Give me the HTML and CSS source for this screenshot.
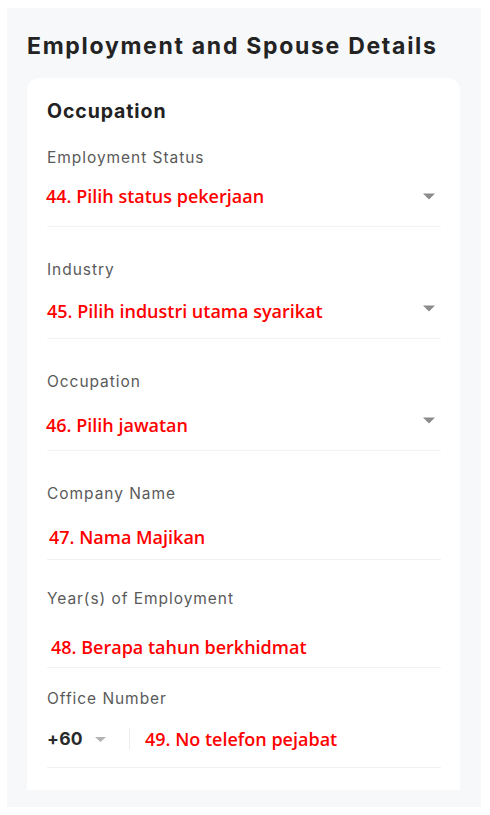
FILE: index.html
```html
<!DOCTYPE html>
<html>
<head>
<meta charset="utf-8">
<link rel="stylesheet" href="styles.css">
</head>
<body>
<div class="panel">
  <h1 class="title">Employment and Spouse Details</h1>
  <div class="card">
    <h2 class="heading">Occupation</h2>

    <div class="field">
      <div class="label">Employment Status</div>
      <div class="row">
        <span class="value">44. Pilih status pekerjaan</span>
        <svg class="caret" width="12" height="7" viewBox="0 0 12 7"><path d="M0 0.5 H12 L6 6.5 Z" fill="#8c8c8c"/></svg>
      </div>
    </div>

    <div class="field">
      <div class="label">Industry</div>
      <div class="row">
        <span class="value value--low value--in1">45. Pilih industri utama syarikat</span>
        <svg class="caret" width="12" height="7" viewBox="0 0 12 7"><path d="M0 0.5 H12 L6 6.5 Z" fill="#8c8c8c"/></svg>
      </div>
    </div>

    <div class="field">
      <div class="label">Occupation</div>
      <div class="row">
        <span class="value value--lower">46. Pilih jawatan</span>
        <svg class="caret" width="12" height="7" viewBox="0 0 12 7"><path d="M0 0.5 H12 L6 6.5 Z" fill="#8c8c8c"/></svg>
      </div>
    </div>

    <div class="field">
      <div class="label">Company Name</div>
      <div class="row row--text">
        <span class="value value--in3">47. Nama Majikan</span>
      </div>
    </div>

    <div class="field field--tight">
      <div class="label">Year(s) of Employment</div>
      <div class="row row--text row--tall">
        <span class="value value--in5">48. Berapa tahun berkhidmat</span>
      </div>
    </div>

    <div class="field field--tighter">
      <div class="label">Office Number</div>
      <div class="row row--phone">
        <span class="code">+60</span>
        <svg class="code-caret" width="11" height="5" viewBox="0 0 11 5"><path d="M0 0 H11 L5.5 5 Z" fill="#b3b3b3"/></svg>
        <span class="sep"></span>
        <span class="value">49. No telefon pejabat</span>
      </div>
    </div>
  </div>
</div>
</body>
</html>
```

FILE: styles.css
```css
html, body {
  margin: 0;
  padding: 0;
  background: #ffffff;
}

.panel {
  margin: 8px 9px 0 7px;
  padding: 23px 21px 17px 20px;
  background: #f7f8fa;
}

.title {
  margin: 0;
  font-family: Inter, Roboto, "Liberation Sans", sans-serif;
  font-weight: 700;
  font-size: 23px;
  line-height: 30px;
  color: #232323;
  letter-spacing: 1.7px;
  white-space: nowrap;
}

.card {
  margin-top: 17px;
  background: #ffffff;
  border-radius: 12px 12px 0 0;
  padding: 21px 19px 22px 20px;
}

.heading {
  margin: 0;
  font-family: Inter, Roboto, "Liberation Sans", sans-serif;
  font-weight: 700;
  font-size: 19.5px;
  line-height: 24px;
  color: #222222;
  letter-spacing: 0.9px;
}

.field {
  margin-top: 33px;
  border-bottom: 1px solid #f1f2f4;
}

.heading + .field {
  margin-top: 25px;
}

.field--tight {
  margin-top: 29px;
}

.field--tighter {
  margin-top: 21px;
}

.label {
  font-family: Inter, Roboto, "Liberation Sans", sans-serif;
  font-size: 15.5px;
  line-height: 20px;
  color: #5a5a5a;
  letter-spacing: 0.95px;
}

.row {
  display: flex;
  align-items: center;
  justify-content: space-between;
  height: 40px;
  margin-top: 8px;
  margin-bottom: 10px;
}

.row--text {
  align-items: flex-end;
  height: 37px;
}

.row--tall {
  height: 42px;
  margin-bottom: 8px;
}

.row--phone {
  justify-content: flex-start;
  box-sizing: border-box;
  padding-top: 4px;
}

.value {
  font-family: "Open Sans", "Noto Sans", sans-serif;
  font-weight: 600;
  font-size: 18px;
  line-height: 23px;
  color: #ff0000;
  margin-left: -1px;
}

.value--low {
  margin-top: 6px;
}

.value--lower {
  margin-top: 10px;
}

.value--in1 {
  margin-left: 0;
}

.value--in3 {
  margin-left: 2px;
}

.value--in5 {
  margin-left: 4px;
}

.caret {
  display: block;
  margin-right: 6px;
}

.code {
  font-family: Inter, Roboto, "Liberation Sans", sans-serif;
  font-weight: 700;
  font-size: 17.5px;
  line-height: 22px;
  color: #2a2a2a;
  letter-spacing: 0.3px;
}

.code-caret {
  display: block;
  margin-left: 12px;
}

.sep {
  width: 1px;
  height: 22px;
  background: #ececec;
  margin-left: 23px;
  margin-right: 15px;
}

.row--phone .value {
  margin-left: 0;
}
```
